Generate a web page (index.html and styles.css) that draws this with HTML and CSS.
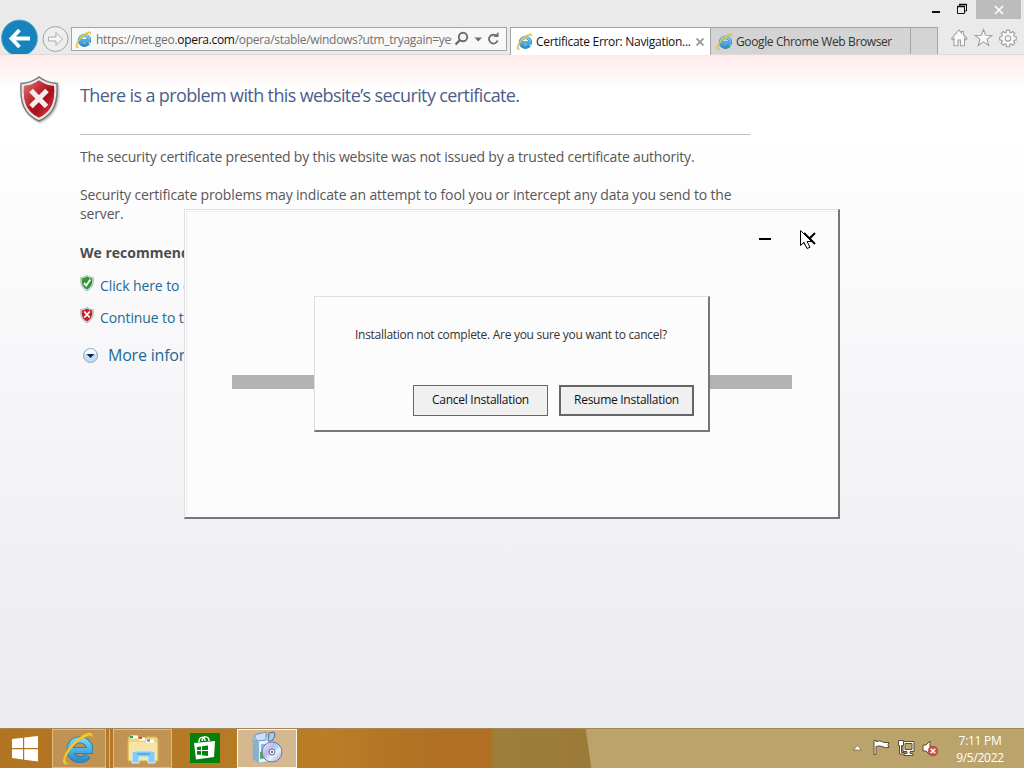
FILE: index.html
```html
<!DOCTYPE html>
<html lang="en">
<head>
<meta charset="utf-8">
<title>Certificate Error: Navigation Blocked</title>
<link rel="stylesheet" href="styles.css">
</head>
<body>
<svg class="defs" width="0" height="0">
  <defs>
    <linearGradient id="ieBlue" x1="0" y1="0" x2="0" y2="1"><stop offset="0" stop-color="#75d5f5"/><stop offset=".5" stop-color="#4bb3e8"/><stop offset="1" stop-color="#2f8fcb"/></linearGradient>
    <linearGradient id="red" x1="0" y1="0" x2="1" y2="1"><stop offset="0" stop-color="#e07474"/><stop offset=".45" stop-color="#b91e28"/><stop offset=".6" stop-color="#a80f1a"/><stop offset="1" stop-color="#e8484c"/></linearGradient>
    <linearGradient id="disc" x1="0" y1="0" x2="1" y2="1"><stop offset="0" stop-color="#f5f7ff"/><stop offset=".4" stop-color="#b9b5ea"/><stop offset=".6" stop-color="#e6f2ff"/><stop offset="1" stop-color="#9aa2dd"/></linearGradient>
    <symbol id="ie" viewBox="0 0 32 32">
      <path d="M9 18.500H27A9.300 9.300 0 1 0 25.300 23" fill="none" stroke="#2377aa" stroke-width="6.400"/>
      <path d="M9 18.500H27A9.300 9.300 0 1 0 25.300 23" fill="none" stroke="url(#ieBlue)" stroke-width="5"/>
      <path d="M7.500 30.500C3 33 .6 30 2.400 25 5 17 14 7 22 3c5-2.500 9-2 7.400 3.500C28.500 3.400 26 4 22.500 6 14 10.500 6.500 19 4.500 25.500c-1 3.500.3 5 3 5Z" fill="#f5ca35" stroke="#d6a722" stroke-width=".6"/>
    </symbol>
    <symbol id="shield" viewBox="0 0 40 46">
      <path d="M20 1c5 4 11 6 18 6.500C39 25 36 38 20 45 4 38 1 25 2 7.500 9 7 15 5 20 1Z" fill="#e5e5e5" stroke="#777" stroke-width="1.400"/>
      <path d="M20 4.500c5 3.500 9 5 15 5.500C36 25 33 35 20 41.500 7 35 4 25 5 10c6-.5 10-2 15-5.500Z" fill="currentColor"/>
    </symbol>
  </defs>
</svg>

<div class="screen">
  <header class="chrome">
    <div class="titlebar">
      <svg width="48" height="19" viewBox="0 0 48 19"><path d="M4 12h8" stroke="#111" stroke-width="2"/><path d="M32 6V4.500h6.500V11H37M29.500 6.500h7v7h-7Z" fill="none" stroke="#111" stroke-width="1"/><path d="M31 4.500h8M29 6.500h8" stroke="#111" stroke-width="1.500"/></svg>
      <div class="close-box"><svg width="10" height="10" viewBox="0 0 10 10"><path d="M1 1l8 8M9 1L1 9" stroke="#fff" stroke-width="1.700"/></svg></div>
    </div>
    <div class="navbar">
      <svg class="back" width="38" height="35" viewBox="0 0 38 35"><circle cx="18.500" cy="19" r="18" fill="#1683bd" stroke="#6aa9c8" stroke-width=".8"/><path d="M29 19.500H11M18.500 11l-8 8.500 8 8.500" fill="none" stroke="#fff" stroke-width="3.800"/></svg>
      <svg class="forward" width="27" height="35" viewBox="0 0 27 35"><circle cx="13.500" cy="20" r="12.500" fill="#eee" stroke="#a2a2a2"/><path d="M6.500 18v4H14v4.500l6.500-6.500-6.500-6.500V18Z" fill="#f6f6f6" stroke="#aaa"/></svg>
      <div class="address">
        <svg class="ie-small"><use href="#ie"/></svg>
        <div class="url">https://net.geo.<span>opera.com</span>/opera/stable/windows?utm_tryagain=yes</div>
        <svg class="address-icons" width="54" height="22" viewBox="0 0 54 22"><g fill="none" stroke="#6c6c6c"><circle cx="11" cy="9" r="4.200" stroke-width="1.900"/><path d="M8 12l-4.500 4.500" stroke-width="2.400"/><path d="M44.700 8.200A4.400 4.400 0 1 0 45.600 12.500" stroke-width="1.800"/></g><path d="M22.500 9.500H30L26.200 13.500Z" fill="#6c6c6c"/><path d="M41.500 9h5V4Z" fill="#6c6c6c"/></svg>
      </div>
      <nav class="tabs">
        <div class="tab active"><svg class="ie-small"><use href="#ie"/></svg><span class="tab-label">Certificate Error: Navigation...</span><svg class="tab-close" width="8" height="8" viewBox="0 0 8 8"><path d="M.5.5l7 7M7.500.5l-7 7" stroke="#999" stroke-width="1.900"/></svg></div>
        <div class="tab other"><svg class="ie-small"><use href="#ie"/></svg><span class="tab-label two">Google Chrome Web Browser</span></div>
        <div class="tab new"></div>
      </nav>
      <svg class="tools" width="74" height="26" viewBox="0 0 74 26"><g fill="#fafafa" stroke="#a0a0a0" stroke-width="1.100"><path d="M1.500 12.500L9 4l2.500 3V5.500h2V9l3.500 3.500-1 1.200-1.500-1.200v7.300h-4V14H8v5.800H4v-7.300l-1.500 1.200Z"/><path d="M33.500 3.500l2.200 5.800 6.200.2-4.900 3.900 1.800 6-5.300-3.500-5.300 3.500 1.800-6-4.900-3.900 6.200-.2Z"/><path id="gear" d="M56.500 4.100h3l.3 2.200 1.200.5 1.800-1.300 2.100 2.100-1.300 1.800.5 1.200 2.200.3v3l-2.200.3-.5 1.200 1.300 1.800-2.100 2.100-1.800-1.300-1.200.5-.3 2.200h-3l-.3-2.200-1.200-.5-1.800 1.300-2.100-2.100 1.300-1.800-.5-1.200-2.200-.3v-3l2.200-.3.5-1.200-1.300-1.800 2.100-2.100L55 6.800l1.200-.5Z"/><circle cx="58" cy="12.400" r="2.700"/></g></svg>
    </div>
  </header>

  <main class="page">
    <svg class="big-shield" width="40" height="46" viewBox="0 0 40 46"><use href="#shield"/><path d="M20 4.500c5 3.500 9 5 15 5.500C36 25 33 35 20 41.500 7 35 4 25 5 10c6-.5 10-2 15-5.500Z" fill="url(#red)"/><path d="M12 14.500l15.500 16M28 14.500l-16 16" stroke="#f3eeee" stroke-width="5"/></svg>
    <section class="message">
      <h1>There is a problem with this website’s security certificate.</h1>
      <p class="issued">The security certificate presented by this website was not issued by a trusted certificate authority.</p>
      <p class="warning">Security certificate problems may indicate an attempt to fool you or intercept any data you send to the<br>server.</p>
      <p class="recommend">We recommend that you close this webpage.</p>
      <div class="choice"><svg class="mini green" width="14" height="16"><use href="#shield"/><path d="M4 8l2.300 2.500 4-6" fill="none" stroke="#fff" stroke-width="1.900"/></svg><a>Click here to close this webpage.</a></div>
      <div class="choice"><svg class="mini" width="14" height="16"><use href="#shield"/><path d="M4.200 4.500l5.500 6M9.800 4.500l-5.500 6" stroke="#fff" stroke-width="1.800"/></svg><a>Continue to this website.</a></div>
      <div class="more"><svg width="16" height="16" viewBox="0 0 16 16"><circle cx="7.500" cy="8.500" r="7" fill="#c4def3" stroke="#8fa9bd"/><path d="M2 7.500a5.500 5.500 0 0 1 11 0Z" fill="#f8fcff"/><path d="M3.500 7h8L7.500 11Z" fill="#052858"/></svg><a>More information</a></div>
    </section>
  </main>

  <footer class="taskbar">
    <svg class="start" width="28" height="26" viewBox="0 0 28 26"><path d="M1 3l11-1.300V12H1ZM13.200 1.600L27 0v12H13.200ZM1 13.200h11V23.500L1 22ZM13.200 13.200H27V25.500l-13.800-1.800Z" fill="#fff"/></svg>
    <div class="task stacked"><svg width="34" height="34"><use href="#ie"/></svg></div>
    <div class="task folder"><svg width="34" height="32" viewBox="0 0 34 32"><path d="M2 28V5l2-2h7l2 3h5l3-2h9l2 2v22Z" fill="#f0d382" stroke="#d8b457"/><path d="M3 9h28v18H3Z" fill="#f8e4a2"/><path d="M5 4h7M13 6h6M20 8h8" stroke="#fff" stroke-width="3"/><path d="M4 4h3" stroke="#28a745" stroke-width="2"/><path d="M13 5h3" stroke="#e34b32" stroke-width="2"/><path d="M21 7.500h3" stroke="#3a8bd8" stroke-width="2"/><path d="M6 20l2-2h19l2 2v10h-7v-6h-9v6H6Z" fill="#8bcaed" stroke="#d3f0ff"/><path d="M11 21h13" stroke="#5daadd" stroke-width="2"/></svg></div>
    <svg class="store" width="30" height="30" viewBox="0 0 30 30"><path d="M0 0h30v30H0Z" fill="#06800d"/><path d="M4 10l21-2-1 16-18 2.500Z" fill="#fff"/><path d="M9 9c0-6 6-6 6-1M12 8c1-6 7-5 7 0" fill="none" stroke="#fff" stroke-width="1.500"/><path d="M7 14l4-.5V17H7ZM12 13.300l6-.8V17h-6ZM7 18h4v4l-4-.5ZM12 18h6v5l-6-.8Z" fill="#06800d"/></svg>
    <div class="task installer"><svg width="33" height="34" viewBox="0 0 33 34"><path d="M3 7l16-2 4 4v21L9 32l-6-4Z" fill="#e4f3fc" stroke="#8faabc" stroke-width=".7"/><path d="M3 7l6 4v21l-6-4Z" fill="#86b1cf"/><path d="M4 4l12-3v8l-9 1Z" fill="#c7e2f8" stroke="#6f94b9"/><path d="M19 2l5-1 1 4-3 5h-4Z" fill="#a4cdf0" stroke="#536a95"/><path d="M11 13h11v13H11Z" fill="#79c4ef"/><path d="M10 21l7-2v8l-7 1Z" fill="#59aa55"/><circle cx="22" cy="21" r="10" fill="url(#disc)" stroke="#7272a5"/><path d="M22 21l3-9 5 5Z" fill="#9bdff2" opacity=".6"/><circle cx="22" cy="21" r="3" fill="#eee" stroke="#6c6c9b"/><circle cx="22" cy="21" r="1" fill="#555"/></svg></div>
    <div class="tray">
      <svg width="88" height="22" viewBox="0 0 88 22"><g stroke="#594c34" stroke-width="1" fill="#fff"><path d="M3.500 13l4-4.500 4 4.500Z" stroke-width=".6"/><path d="M24 3.500h2v1q4-2 8 1h5q-2 2 0 5-4 1-7-1-3-1-6 0v8h-2Z"/><path d="M53 4.500h11v10h-4v2h3v2h-9v-2h3v-2h-4Z"/><path d="M55 6.500h7v6h-7Z" fill="#c0a66d"/><path d="M48.500 3.500h5v5h-2v7h3v1.500h-5V8.500h-1Z"/><path d="M73 8h3l4-4v14l-4-4h-3Z"/></g><circle cx="83" cy="14" r="4.800" fill="#cc514b" stroke="#a3302d" stroke-width=".6"/><path d="M80.700 11.700l4.600 4.600M85.300 11.700l-4.600 4.600" stroke="#fff" stroke-width="1.500"/></svg>
    </div>
    <div class="clock"><span>7:11 PM</span><span class="date">9/5/2022</span></div>
  </footer>

  <div class="installer-window">
    <div class="window-buttons"><svg width="60" height="16" viewBox="0 0 60 16"><path d="M2 8h12M47 2l11 11M58 2L47 13" stroke="#000" stroke-width="2"/></svg></div>
    <div class="progress"></div>
  </div>
  <div class="dialog">
    <p>Installation not complete. Are you sure you want to cancel?</p>
    <div class="actions"><button class="cancel">Cancel Installation</button><button class="resume">Resume Installation</button></div>
  </div>
  <svg class="cursor" width="14" height="21" viewBox="0 0 14 21"><path d="M.5.5v15l3.500-3.200 3 6.200 3-1.300-3-5.700h4.500Z" fill="#fff" stroke="#000" stroke-width="1"/></svg>
</div>
</body>
</html>
```
FILE: styles.css
```css
* { box-sizing: border-box; }
body { margin: 0; overflow: hidden; font: 12px "Open Sans", "Noto Sans", sans-serif; }
svg { display: block; flex: none; }
.defs { position: absolute; }
.screen { position: relative; width: 1024px; height: 768px; display: flex; flex-direction: column; overflow: hidden; white-space: nowrap; }

.chrome { height: 55px; background: #eaeaea; border-bottom: 1px solid #dedada; }
.titlebar { height: 19px; display: flex; justify-content: flex-end; padding-right: 3px; }
.close-box { width: 45px; height: 19px; background: #bcbcbc; display: grid; place-items: center; }
.navbar { height: 35px; display: flex; padding-left: 1px; }
.forward { margin-left: 3px; }
.address { width: 436px; height: 24px; margin: 8px 0 0 2px; border: 1px solid #a5a5a5; background: #f8f8f8; display: flex; align-items: center; padding-left: 3px; }
.ie-small { width: 17px; height: 17px; }
.url { width: 356px; margin-left: 4px; overflow: hidden; color: #707070; font-size: 12px; letter-spacing: -.3px; }
.url span { color: #111; }
.tabs { display: flex; margin: 8px 0 0 3px; width: 428px; height: 27px; }
.tab { display: flex; align-items: center; border: 1px solid #a5a5a5; border-bottom: 0; background: #d4d4d4; padding-left: 5px; }
.active { width: 201px; height: 28px; background: #fff; }
.other { width: 200px; border-left: 0; }
.new { width: 27px; border-left: 0; }
.tab-label { width: 156px; margin-left: 3px; font-size: 12px; letter-spacing: -.3px; color: #111; }
.tab-label.two { color: #333; letter-spacing: -.38px; }
.tab-close { margin-left: 4px; }
.tools { margin: 7px 0 0 12px; }

.page { height: 673px; display: flex; background: linear-gradient(#ffebec 0, #fff4f4 16px, rgba(255,255,255,0) 34px), linear-gradient(#fff 0, #fff 80px, #f4f4f7 390px, #ebebf0 673px); }
.big-shield { margin: 21px 0 0 19px; color: #b81d26; filter: drop-shadow(1px 1px 1px #aaa); }
.message { width: 670px; margin-left: 21px; color: #575757; font-size: 14px; }
h1 { margin: 0; height: 80px; padding-top: 27px; border-bottom: 1px solid #bdbdbd; color: #4b5d89; font-size: 18px; line-height: 26px; font-weight: 400; letter-spacing: -.62px; }
p { margin: 0; }
.message p { line-height: 19px; }
.issued { padding-top: 12px; letter-spacing: -.2px; }
.message .warning { padding-top: 19px; letter-spacing: -.15px; }
.message .recommend { padding-top: 20px; font-weight: 700; color: #4c4c4c; }
.choice { display: flex; gap: 6px; height: 32px; padding-top: 12px; line-height: 24px; color: #246994; letter-spacing: -.1px; }
.mini { margin-top: 1px; color: #bd242f; }
.mini.green { color: #2b9936; }
.more { display: flex; align-items: center; gap: 9px; padding: 17px 0 0 3px; height: 41px; color: #246994; font-size: 16px; letter-spacing: -.2px; }

.taskbar { height: 40px; display: flex; align-items: center; border-top: 1px solid #a48656; background: linear-gradient(82deg, transparent 585px, #bba36c 586px), linear-gradient(90deg, #b37422 0, #b97e26 330px, #b27224 410px, #b06f25 490px, #9c803b 494px, #9c7a38 590px); }
.start { margin-left: 11px; }
.task { height: 39px; border: 1px solid #dfba83; background: rgba(207,181,145,.45); display: grid; place-items: center; }
.stacked { width: 54px; margin-left: 13px; padding-right: 2px; box-shadow: 3px 0 #b27b2c, 4px 0 #d9b47c; }
.stacked svg, .installer svg { margin-bottom: 2px; }
.folder { width: 59px; margin-left: 7px; }
.store { margin: 0 0 1px 18px; }
.installer { width: 60px; margin-left: 17px; padding-right: 2px; border-color: #fff7e5; background: rgba(223,209,188,.7); }
.tray { margin: 0 0 2px 553px; }
.clock { width: 64px; margin-left: 10px; display: flex; flex-direction: column; align-items: center; color: #fff; line-height: 17px; letter-spacing: -.3px; }

.installer-window { position: absolute; left: 184px; top: 209px; width: 656px; height: 310px; background: #fcfcfc; border: 1px solid #e0e0e0; border-right: 2px solid #777; border-bottom: 2px solid #777; box-shadow: inset 1px 1px #fff, inset 2px 2px #eee; }
.window-buttons { display: flex; justify-content: flex-end; padding: 21px 21px 0 0; }
.progress { width: 560px; height: 14px; margin: 128px 0 0 47px; background: #b3b3b3; }
.dialog { position: absolute; left: 314px; top: 296px; width: 396px; height: 136px; background: #fcfcfc; border: 1px solid #ddd; border-right: 2px solid #777; border-bottom: 2px solid #777; color: #333; box-shadow: inset 1px 1px #fff; }
.dialog p { padding: 29px 0 0 40px; line-height: 18px; letter-spacing: -.29px; }
.actions { display: flex; justify-content: flex-end; gap: 11px; padding: 41px 14px 0 0; }
button { width: 135px; height: 31px; padding: 0 0 2px; border: 1px solid #666; background: #f0f0f0; color: #111; font: 12px "Open Sans", sans-serif; letter-spacing: -.28px; border-radius: 0; }
.resume { border-width: 2px; }
.cursor { position: absolute; left: 800px; top: 230px; }
```
